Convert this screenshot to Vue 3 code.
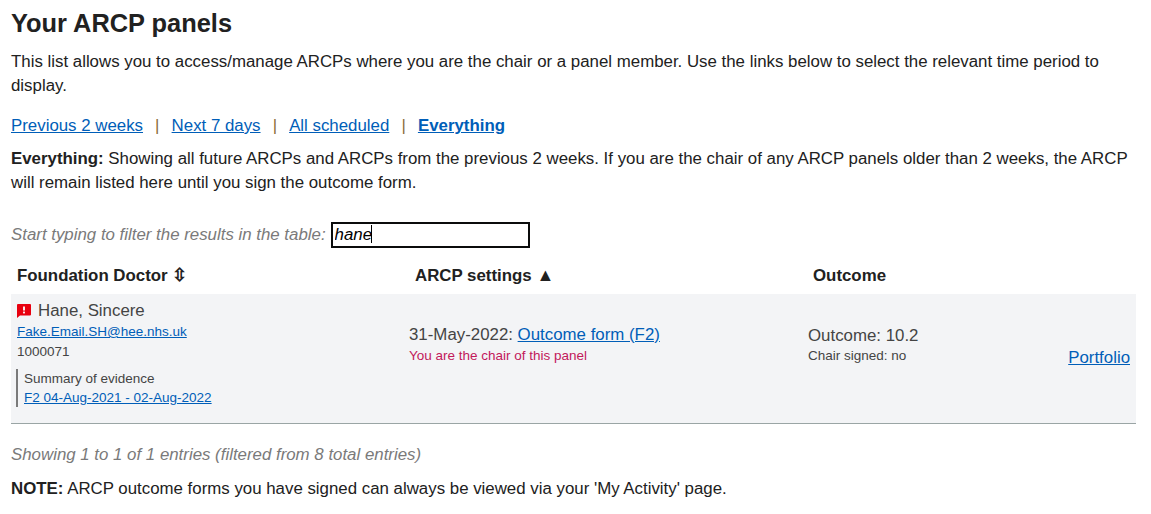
<template>
  <div class="page">
    <h1>Your ARCP panels</h1>
    <p class="intro">
      This list allows you to access/manage ARCPs where you are the chair or a panel member. Use the links below to select the relevant time period to display.
    </p>

    <nav class="periods">
      <template v-for="(period, index) in periods" :key="period.label">
        <span v-if="index > 0" class="sep">|</span>
        <a href="#" :class="{ current: period.current }">{{ period.label }}</a>
      </template>
    </nav>

    <p class="explain">
      <strong>Everything:</strong> Showing all future ARCPs and ARCPs from the previous 2 weeks. If you are the chair of any ARCP panels older than 2 weeks, the ARCP will remain listed here until you sign the outcome form.
    </p>

    <div class="filter">
      <label for="filter-input">Start typing to filter the results in the table:</label>
      <div class="filter-box">
        <input id="filter-input" type="text" v-model="filter" />
        <span class="caret"></span>
      </div>
    </div>

    <table class="results">
      <colgroup>
        <col class="col-doctor" />
        <col class="col-settings" />
        <col class="col-outcome" />
        <col />
      </colgroup>
      <thead>
        <tr>
          <th>Foundation Doctor <span class="sort">⇳</span></th>
          <th>ARCP settings <span class="sort">▲</span></th>
          <th>Outcome</th>
          <th></th>
        </tr>
      </thead>
      <tbody>
        <tr>
          <td class="doctor">
            <div class="name">
              <svg class="flag" viewBox="0 0 14 14" width="14" height="14" aria-hidden="true">
                <path d="M0 1a1 1 0 0 1 1-1h12a1 1 0 0 1 1 1v9.500a1 1 0 0 1-1 1H3L0 14z" fill="#e8000f" />
                <rect x="6.100" y="2.500" width="1.800" height="4" fill="#fff" />
                <rect x="6.100" y="7.600" width="1.800" height="1.800" fill="#fff" />
              </svg>
              Hane, Sincere
            </div>
            <a class="small" href="#">Fake.Email.SH@hee.nhs.uk</a>
            <div class="small gmc">1000071</div>
            <div class="evidence">
              <div class="small">Summary of evidence</div>
              <a class="small" href="#">F2 04-Aug-2021 - 02-Aug-2022</a>
            </div>
          </td>
          <td class="settings">
            <div>31-May-2022: <a href="#">Outcome form (F2)</a></div>
            <div class="small chair">You are the chair of this panel</div>
          </td>
          <td class="outcome">
            <div>Outcome: 10.2</div>
            <div class="small signed">Chair signed: no</div>
          </td>
          <td class="portfolio"><a href="#">Portfolio</a></td>
        </tr>
      </tbody>
    </table>

    <p class="showing">Showing 1 to 1 of 1 entries (filtered from 8 total entries)</p>
    <p class="note"><strong>NOTE:</strong> ARCP outcome forms you have signed can always be viewed via your 'My Activity' page.</p>
  </div>
</template>

<script setup>
import { ref } from 'vue'

const filter = ref('hane')

const periods = [
  { label: 'Previous 2 weeks' },
  { label: 'Next 7 days' },
  { label: 'All scheduled' },
  { label: 'Everything', current: true }
]
</script>

<style>
body {
  background: #fff;
}
</style>

<style scoped>
.page {
  padding: 0 11px;
  font-family: "Liberation Sans", Arial, sans-serif;
  font-size: 16.85px;
  line-height: 24px;
  color: #212121;
}

h1 {
  margin: 0;
  padding-top: 9px;
  font-size: 25.4px;
  line-height: 28px;
  font-weight: 700;
}

p {
  margin: 0;
}

a {
  color: #005eb8;
}

.intro {
  margin-top: 13px;
  width: 1110px;
}

.periods {
  margin-top: 16px;
}

.periods .sep {
  margin: 0 12.1px;
  color: #8a6d3b;
}

.periods .current {
  font-weight: 700;
}

.explain {
  margin-top: 9px;
}

.filter {
  display: flex;
  align-items: center;
  margin-top: 27px;
  font-style: italic;
  color: #7a7a7a;
}

.filter label {
  margin-right: 5px;
}

.filter-box {
  position: relative;
}

.filter input {
  display: block;
  width: 199px;
  height: 26px;
  box-sizing: border-box;
  padding: 0 2px;
  border: 2px solid #0b0c0c;
  outline: none;
  font: italic 16.85px "Liberation Sans", Arial, sans-serif;
  color: #000;
  background: #fff;
}

.caret {
  position: absolute;
  left: 40px;
  top: 3px;
  width: 1px;
  height: 18px;
  background: #000;
}

.results {
  width: 1125px;
  margin-top: 16px;
  border-collapse: collapse;
  table-layout: fixed;
}

.col-doctor,
.col-settings {
  width: 398px;
}

.col-outcome {
  width: 200px;
}

th {
  padding: 0 6px 6px;
  height: 24px;
  text-align: left;
  font-weight: 700;
  color: #212121;
  white-space: nowrap;
}

th .sort {
  font-size: 18px;
  line-height: 1;
}

tbody tr {
  background: #f3f4f6;
  border-bottom: 1px solid #9aa5a5;
}

td {
  height: 129px;
  padding: 0;
  box-sizing: border-box;
  vertical-align: top;
  color: #444;
}

.small {
  font-size: 13.5px;
  line-height: 20px;
}

.doctor {
  padding: 5px 6px 0 6px;
}

.name {
  display: flex;
  align-items: center;
  gap: 7px;
  height: 24px;
  margin-bottom: -1px;
}

.doctor a {
  display: block;
}

.evidence {
  margin: 7px 0 0 -1px;
  padding-left: 6px;
  border-left: 2px solid #7a7a7a;
}

.evidence .small {
  line-height: 19px;
}

.settings {
  padding-top: 29px;
}

.chair {
  margin-top: -1px;
  color: #c2185b;
}

.outcome {
  padding: 30px 0 0 1px;
}

.signed {
  margin-top: -2px;
}

.portfolio {
  padding: 0 6px 1px 0;
  text-align: right;
  vertical-align: middle;
}

.showing {
  margin-top: 19px;
  font-style: italic;
  color: #7a7a7a;
}

.note {
  margin-top: 10px;
}
</style>
